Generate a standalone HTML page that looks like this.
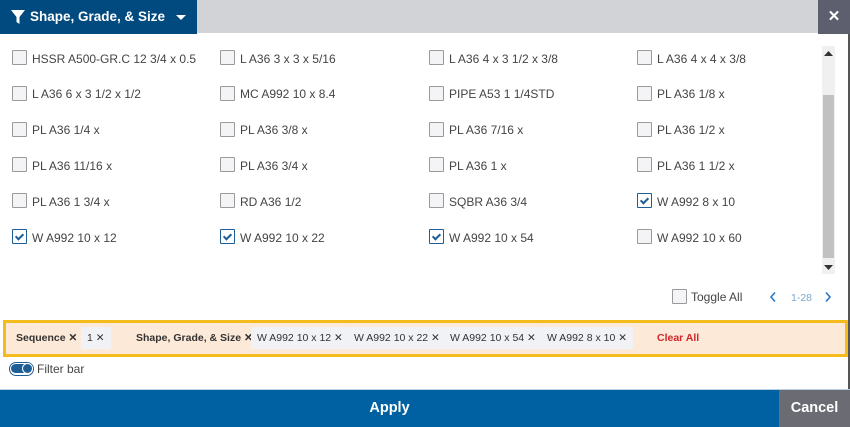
<!DOCTYPE html>
<html><head><style>
*{margin:0;padding:0;box-sizing:border-box}
body{width:850px;height:427px;overflow:hidden;background:#fff;font-family:"Liberation Sans",Arial,sans-serif;position:relative;color:#333}
.hd{position:absolute;left:0;top:0;width:850px;height:33px;background:#d2d3d7}
.tab{position:absolute;left:0;top:0;width:197px;height:34px;background:#004a7f;color:#fff;font-weight:bold;font-size:13.5px;line-height:34px;padding-left:30px}
.x{position:absolute;left:818px;top:0;width:32px;height:34px;background:#5e5f6e;color:#fff;font-size:15px;font-weight:bold;text-align:center;line-height:34px}
.rb{position:absolute;left:848px;top:34px;width:2px;height:356px;background:#555}
.it{position:absolute;font-size:12px;color:#444;line-height:14px;white-space:nowrap}
.cb{position:absolute;width:15px;height:15px;border:1.5px solid #9a9a9a;background:#f4f4f6;border-radius:1px}
.cb.on{border-color:#1e5e96;background:#fff}
.cb.on::after{content:"";position:absolute;left:4px;top:2px;width:3px;height:6px;border:solid #1e5e96;border-width:0 2px 2px 0;transform:rotate(45deg)}
.sb{position:absolute;left:822px;top:46px;width:13px;height:228px;background:#f0f0f0}
.th{position:absolute;left:823px;top:95px;width:11px;height:163px;background:#c1c1c1}
.fb{position:absolute;left:3px;top:320px;width:845px;height:37px;border:3px solid #f3bc1c;background:#fde9d7}
.ch{position:absolute;top:327px;height:22px;line-height:22px;font-size:10.5px;color:#333;white-space:nowrap}
.chip{background:#f1f2f6;padding:0 6px;border-radius:2px}
.ap{position:absolute;left:0;top:390px;width:779px;height:37px;background:#0061a2;color:#fff;font-weight:bold;font-size:14.5px;text-align:center;line-height:37px}
.cn{position:absolute;left:779px;top:390px;width:71px;height:37px;background:#6b6b74;color:#fff;font-weight:bold;font-size:14.5px;text-align:center;line-height:37px}
</style></head><body>
<div class="hd"></div>
<div class="tab"><svg style="position:absolute;left:11px;top:10px" width="14" height="14" viewBox="0 0 14 14"><path d="M0 0H14L8.5 7V14L5.5 12V7Z" fill="#fff"/></svg>Shape, Grade, &amp; Size<svg style="position:absolute;left:176px;top:15px" width="10" height="6"><path d="M0 0H10L5 5Z" fill="#fff"/></svg></div>
<div class="x">✕</div>
<div class="rb"></div>
<div id="g"></div>
<div class="sb"></div><div class="th"></div>
<svg style="position:absolute;left:824px;top:51px" width="9" height="5"><path d="M0 5H9L4.5 0Z" fill="#333"/></svg>
<svg style="position:absolute;left:824px;top:265px" width="9" height="5"><path d="M0 0H9L4.5 5Z" fill="#333"/></svg>
<div class="cb" style="left:672px;top:289px"></div><div class="it" style="left:691px;top:290px">Toggle All</div>
<svg style="position:absolute;left:770px;top:292px" width="6" height="10"><path d="M5 0.5L1 5L5 9.5" stroke="#2a7ac0" stroke-width="1.6" fill="none"/></svg>
<div class="it" style="left:791px;top:291px;color:#7aa7cf;font-size:10.5px">1-28</div>
<svg style="position:absolute;left:825px;top:292px" width="6" height="10"><path d="M1 0.5L5 5L1 9.5" stroke="#2a7ac0" stroke-width="1.6" fill="none"/></svg>
<div class="fb"></div>
<div class="ch" style="left:16px;font-weight:bold">Sequence ✕</div>
<div class="ch chip" style="left:81px">1 ✕</div>
<div class="ch" style="left:136px;font-weight:bold">Shape, Grade, &amp; Size ✕</div>
<div class="ch chip" style="left:251px">W A992 10 x 12 ✕</div>
<div class="ch chip" style="left:348px">W A992 10 x 22 ✕</div>
<div class="ch chip" style="left:444px">W A992 10 x 54 ✕</div>
<div class="ch chip" style="left:541px">W A992 8 x 10 ✕</div>
<div class="ch" style="left:657px;font-weight:bold;color:#d0262b">Clear All</div>
<div style="position:absolute;left:9px;top:362px;width:25px;height:14px;border:1.5px solid #1e5e96;border-radius:7px;background:#fff"><div style="position:absolute;left:1px;top:1px;width:21px;height:9px;border-radius:5px;background:#1e5e96"></div><div style="position:absolute;right:0;top:0;width:11px;height:11px;border-radius:50%;background:#1e5e96;border:1px solid #fff"></div></div>
<div class="it" style="left:37px;top:362px">Filter bar</div>
<div style="position:absolute;left:0;top:389px;width:850px;height:1px;background:#b9cfe3"></div>
<div class="ap">Apply</div><div class="cn">Cancel</div>
<script>
var d=[["HSSR A500-GR.C 12 3/4 x 0.5","L A36 3 x 3 x 5/16","L A36 4 x 3 1/2 x 3/8","L A36 4 x 4 x 3/8"],["L A36 6 x 3 1/2 x 1/2","MC A992 10 x 8.4","PIPE A53 1 1/4STD","PL A36 1/8 x"],["PL A36 1/4 x","PL A36 3/8 x","PL A36 7/16 x","PL A36 1/2 x"],["PL A36 11/16 x","PL A36 3/4 x","PL A36 1 x","PL A36 1 1/2 x"],["PL A36 1 3/4 x","RD A36 1/2","SQBR A36 3/4","W A992 8 x 10"],["W A992 10 x 12","W A992 10 x 22","W A992 10 x 54","W A992 10 x 60"]];
var on={"W A992 8 x 10":1,"W A992 10 x 12":1,"W A992 10 x 22":1,"W A992 10 x 54":1};
var xs=[12,220,429,637],h="";
d.forEach(function(r,i){var y=50+i*35.8;r.forEach(function(t,j){h+='<div class="cb'+(on[t]?' on':'')+'" style="left:'+xs[j]+'px;top:'+y+'px"></div><div class="it" style="left:'+(xs[j]+20)+'px;top:'+(y+1.5)+'px">'+t+'</div>'})});
document.getElementById("g").innerHTML=h;
</script>
</body></html>
